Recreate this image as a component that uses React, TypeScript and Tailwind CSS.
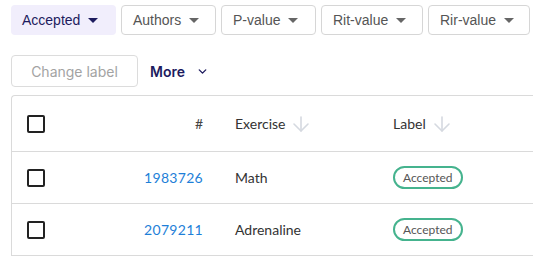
import { ChevronDown, ArrowDown } from "lucide-react";

const filters = [
  { name: "Authors", w: "w-[95px]" },
  { name: "P-value", w: "w-[95px]" },
  { name: "Rit-value", w: "w-[102px]" },
  { name: "Rir-value", w: "w-[102px]" },
];

const rows = [
  { id: "1983726", exercise: "Math", label: "Accepted" },
  { id: "2079211", exercise: "Adrenaline", label: "Accepted" },
];

const Caret = ({ color }: { color: string }) => (
  <svg width="10" height="5" viewBox="0 0 10 5" className="ml-2">
    <path d="M0 0 L10 0 L5 5 Z" fill={color} />
  </svg>
);

const Checkbox = () => (
  <div className="w-[18px] h-[18px] border-2 border-[#222] rounded-[2px]" />
);

const App = () => {
  return (
    <div className="w-[533px] h-[256px] overflow-hidden bg-white">
      <div className="flex flex-row gap-[5px] pl-[11px] pt-[5px] font-['Liberation_Sans',sans-serif] text-[14px]">
        <button className="flex items-center shrink-0 h-[30px] w-[105px] pl-[11px] rounded-[4px] bg-[#f1eefc] text-[#1d1b5e]">
          Accepted
          <Caret color="#1d1b5e" />
        </button>
        {filters.map((f) => (
          <button
            key={f.name}
            className={`flex items-center shrink-0 h-[30px] ${f.w} pl-[11px] rounded-[4px] border border-[#d6d6d6] text-[#555]`}
          >
            {f.name}
            <Caret color="#666" />
          </button>
        ))}
      </div>
      <div className="flex flex-row items-center mt-[20px] pl-[11px] font-['Inter',sans-serif] text-[14px]">
        <button className="h-[32px] w-[127px] rounded-[4px] border border-[#dcdcdc] text-[#a3a3a3]">
          Change label
        </button>
        <button className="flex items-center ml-[12px] text-[#1d1b5e] font-semibold">
          More
          <ChevronDown size={13} strokeWidth={2.5} className="ml-[11px]" />
        </button>
      </div>
      <div className="ml-[11px] mt-[8px] w-[560px] border-l border-t border-[#dadada] rounded-tl-[4px] font-['Lato',sans-serif] text-[14px] text-[#333]">
        <div className="flex flex-row items-center h-[56px] border-b border-[#dadada]">
          <div className="w-[55px] pl-[15px]">
            <Checkbox />
          </div>
          <div className="w-[136px] text-right text-[#444]">#</div>
          <div className="w-[190px] pl-[32px] flex items-center">
            Exercise
            <ArrowDown size={24} className="ml-[4px] text-[#d5d9e0]" strokeWidth={1.6} />
          </div>
          <div className="flex items-center">
            Label
            <ArrowDown size={24} className="ml-[4px] text-[#d5d9e0]" strokeWidth={1.6} />
          </div>
        </div>
        {rows.map((r) => (
          <div key={r.id} className="flex flex-row items-center h-[52px] border-b border-[#dadada]">
            <div className="w-[55px] pl-[15px]">
              <Checkbox />
            </div>
            <div className="w-[136px] text-right text-[#1e7fd8] tracking-[0.3px]">{r.id}</div>
            <div className="w-[190px] pl-[32px]">{r.exercise}</div>
            <div>
              <span className="inline-flex items-center h-[23px] px-[8px] rounded-full border-2 border-[#45b38e] text-[12px] text-[#555]">
                {r.label}
              </span>
            </div>
          </div>
        ))}
      </div>
    </div>
  );
};

export default App;
